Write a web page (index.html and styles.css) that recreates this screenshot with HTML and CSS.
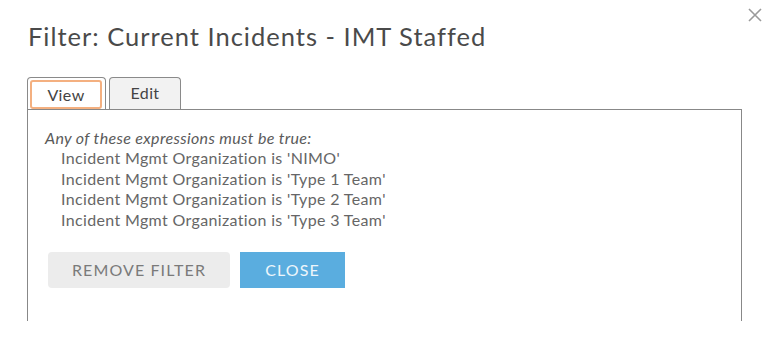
FILE: index.html
```html
<!DOCTYPE html>
<html>
<head>
<meta charset="utf-8">
<link rel="stylesheet" href="styles.css">
</head>
<body>
<div class="dialog">
  <button class="dismiss" aria-label="Close">
    <svg width="14" height="14" viewBox="0 0 14 14"><path d="M1 1L13 13M13 1L1 13" stroke="#9a9a9a" stroke-width="1.6" fill="none"/></svg>
  </button>
  <h1 class="title">Filter: Current Incidents - IMT Staffed</h1>
  <div class="tabs">
    <div class="tab active"><span class="tab-label">View</span></div>
    <div class="tab">Edit</div>
  </div>
  <div class="panel">
    <p class="intro">Any of these expressions must be true:</p>
    <ul class="exprs">
      <li>Incident Mgmt Organization is 'NIMO'</li>
      <li>Incident Mgmt Organization is 'Type 1 Team'</li>
      <li>Incident Mgmt Organization is 'Type 2 Team'</li>
      <li>Incident Mgmt Organization is 'Type 3 Team'</li>
    </ul>
    <div class="actions">
      <button class="btn btn-secondary">Remove Filter</button>
      <button class="btn btn-primary">Close</button>
    </div>
  </div>
</div>
</body>
</html>
```
FILE: styles.css
```css
html, body {
  margin: 0;
  padding: 0;
  background: #fff;
}
body {
  width: 768px;
  height: 342px;
  overflow: hidden;
  font-family: "Lato", "Open Sans", sans-serif;
  color: #555;
}
.dialog {
  position: relative;
  padding: 20px 26px 0 27px;
}
.dismiss {
  position: absolute;
  top: 8px;
  right: 6px;
  border: 0;
  background: none;
  padding: 0;
  width: 14px;
  height: 14px;
  display: flex;
}
.title {
  margin: 0;
  font-weight: 400;
  font-size: 25.5px;
  letter-spacing: 1px;
  line-height: 32px;
  color: #4a4a4a;
  padding-left: 1px;
}
.tabs {
  display: flex;
  margin-top: 25px;
  gap: 3px;
  height: 32px;
}
.tab {
  box-sizing: border-box;
  border: 1px solid #8a8a8a;
  border-bottom: 0;
  border-radius: 4px 4px 0 0;
  background: #f2f2f2;
  font-size: 16px;
  letter-spacing: 0.4px;
  color: #444;
  width: 72px;
  display: flex;
  align-items: center;
  justify-content: center;
  padding-bottom: 2px;
}
.tab.active {
  width: 79px;
  background: #fff;
  padding: 2px 3px 0 2px;
  align-items: stretch;
}
.tab-label {
  flex: 1;
  border: 2px solid #f4b080;
  border-radius: 3px;
  display: flex;
  align-items: center;
  justify-content: center;
  padding-bottom: 1px;
}
.panel {
  box-sizing: border-box;
  border: 1px solid #888;
  border-bottom: 0;
  height: 212px;
  padding: 18px 17px 0 17px;
}
.intro {
  margin: 0;
  font-style: italic;
  font-size: 16px;
  letter-spacing: 0.35px;
  line-height: 20px;
  color: #5a5a5a;
}
.exprs {
  list-style: none;
  margin: 0;
  padding: 0 0 0 16px;
  font-size: 16px;
  letter-spacing: 0.35px;
  line-height: 20.7px;
  color: #666;
}
.actions {
  display: flex;
  gap: 10px;
  margin-top: 21px;
  padding-left: 3px;
}
.btn {
  font-family: inherit;
  font-size: 16px;
  letter-spacing: 1.1px;
  text-transform: uppercase;
  border: 0;
  height: 36px;
  padding: 0;
}
.btn-secondary {
  width: 182px;
  background: #ececec;
  color: #7a7a7a;
  border-radius: 4px;
}
.btn-primary {
  width: 105px;
  background: #5aaddf;
  color: #eef6fb;
}
```
